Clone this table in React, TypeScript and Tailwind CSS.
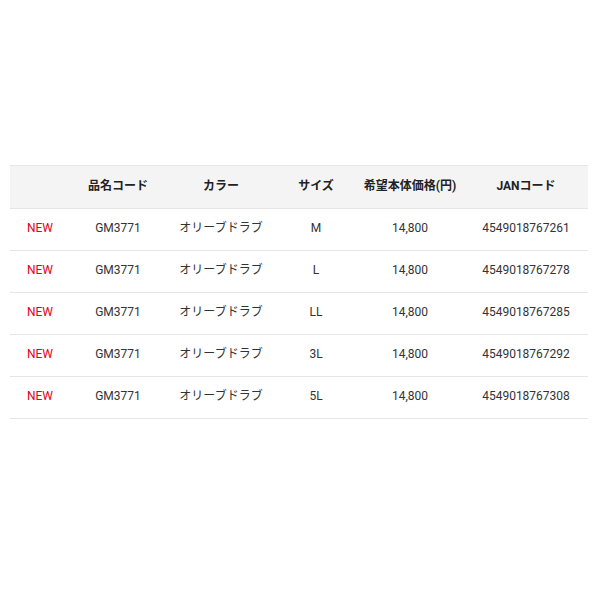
import React from "react";

const rows = [
  { size: "M", jan: "4549018767261" },
  { size: "L", jan: "4549018767278" },
  { size: "LL", jan: "4549018767285" },
  { size: "3L", jan: "4549018767292" },
  { size: "5L", jan: "4549018767308" },
];

const cols = "grid grid-cols-[60px_96px_110px_80px_108px_124px]";

export default function App() {
  return (
    <div
      className="w-[600px] h-[600px] bg-white pt-[165px] pl-[10px]"
      style={{ fontFamily: 'Roboto, "Noto Sans CJK JP", sans-serif' }}
    >
      <div className="w-[578px] border-t border-[#e6e6e6] text-[12px] text-[#333]">
        <div className={`${cols} h-[43px] items-center bg-[#f4f4f4] border-b border-[#e6e6e6] font-bold text-[#222] pb-[2px]`}>
          <div></div>
          <div className="text-center">品名コード</div>
          <div className="text-center">カラー</div>
          <div className="text-center">サイズ</div>
          <div className="text-center">希望本体価格(円)</div>
          <div className="text-center">JANコード</div>
        </div>
        {rows.map((r) => (
          <div key={r.jan} className={`${cols} h-[42px] items-center border-b border-[#e6e6e6] pb-[3px]`}>
            <div className="text-center text-[#e60012]">NEW</div>
            <div className="text-center">GM3771</div>
            <div className="text-center">オリーブドラブ</div>
            <div className="text-center">{r.size}</div>
            <div className="text-center">14,800</div>
            <div className="text-center">{r.jan}</div>
          </div>
        ))}
      </div>
    </div>
  );
}
